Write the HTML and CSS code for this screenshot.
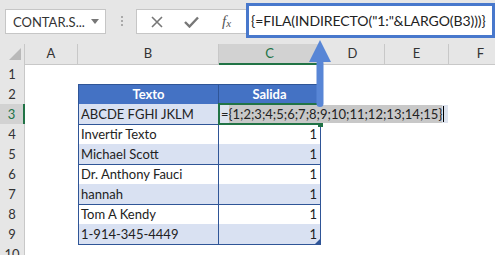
FILE: index.html
```html
<!doctype html>
<html lang="es">
<head>
    <meta charset="UTF-8">
    <meta name="viewport" content="width=device-width, initial-scale=1.0">
    <title>FILA e INDIRECTO</title>
    <link rel="stylesheet" href="styles.css">
</head>
<body>
    <div class="formula-bar">
        <div class="name-box"><span>CONTAR.S...</span><span class="caret"></span></div>
        <div class="grip"><i></i><i></i><i></i></div>
        <div class="fx-buttons">
            <svg width="12" height="12" viewBox="0 0 12 12"><path d="M1 1 L11 11 M11 1 L1 11" stroke="#777" stroke-width="1.6" fill="none"/></svg>
            <svg width="15" height="12" viewBox="0 0 15 12"><path d="M1 6 L5.5 10.5 L14 1.5" stroke="#777" stroke-width="2.4" fill="none"/></svg>
            <span class="fx">f<sub>x</sub></span>
        </div>
        <div class="formula-input">{=FILA(INDIRECTO("1:"&amp;LARGO(B3)))}</div>
    </div>

    <div class="sheet">
        <div class="row col-head">
            <div class="corner"><svg width="12" height="12" viewBox="0 0 12 12"><path d="M12 0 L12 12 L0 12 Z" fill="#b9b9b9"/></svg></div>
            <div>A</div><div>B</div><div class="sel">C</div><div>D</div><div>E</div><div>F</div>
        </div>
        <div class="row">
            <div class="row-head">1</div><div></div><div></div><div></div><div></div><div></div><div></div>
        </div>
        <div class="row">
            <div class="row-head">2</div><div></div>
            <div class="t head">Texto</div><div class="t head">Salida</div>
            <div></div><div></div><div></div>
        </div>
        <div class="row">
            <div class="row-head sel">3</div><div></div>
            <div class="t band">ABCDE FGHI JKLM</div>
            <div class="t band num active">
                <div class="edit">=<span class="picked">{1;2;3;4;5;6;7;8;9;10;11;12;13;14;15}</span><span class="cursor"></span></div>
            </div>
            <div></div><div></div><div></div>
        </div>
        <div class="row">
            <div class="row-head">4</div><div></div>
            <div class="t">Invertir Texto</div><div class="t num">1</div>
            <div></div><div></div><div></div>
        </div>
        <div class="row">
            <div class="row-head">5</div><div></div>
            <div class="t band">Michael Scott</div><div class="t band num">1</div>
            <div></div><div></div><div></div>
        </div>
        <div class="row">
            <div class="row-head">6</div><div></div>
            <div class="t">Dr. Anthony Fauci</div><div class="t num">1</div>
            <div></div><div></div><div></div>
        </div>
        <div class="row">
            <div class="row-head">7</div><div></div>
            <div class="t band">hannah</div><div class="t band num">1</div>
            <div></div><div></div><div></div>
        </div>
        <div class="row">
            <div class="row-head">8</div><div></div>
            <div class="t">Tom A Kendy</div><div class="t num">1</div>
            <div></div><div></div><div></div>
        </div>
        <div class="row">
            <div class="row-head">9</div><div></div>
            <div class="t band">1-914-345-4449</div><div class="t band num last">1</div>
            <div></div><div></div><div></div>
        </div>
        <div class="row">
            <div class="row-head">10</div><div></div><div></div><div></div><div></div><div></div><div></div>
        </div>
    </div>

    <!-- arrow from formula bar down to C3 -->
    <svg class="arrow" width="30" height="72" viewBox="0 0 30 72">
        <path d="M15 2 L26 24 L4 24 Z" fill="#5886d6"/>
        <rect x="11.5" y="22" width="7" height="47" rx="3.5" fill="#5886d6"/>
    </svg>
</body>
</html>
```

FILE: styles.css
```css
body {
    margin: 0;
    width: 495px;
    height: 255px;
    overflow: hidden;
    position: relative;
    background: #fff;
    font-family: Lato, "Liberation Sans", sans-serif;
    color: #222;
}

/* formula bar */
.formula-bar {
    height: 44px;
    background: #e6e6e6;
    display: flex;
    align-items: flex-start;
}
.name-box {
    margin: 9px 0 0 5px;
    width: 101px;
    height: 25px;
    box-sizing: border-box;
    background: #fff;
    border: 1px solid #c6c6c6;
    display: flex;
    align-items: center;
    justify-content: space-between;
    padding: 0 6px 0 7px;
    font-size: 13px;
    color: #333;
}
.caret {
    border-left: 4px solid transparent;
    border-right: 4px solid transparent;
    border-top: 5px solid #777;
}
.grip {
    margin: 16px 0 0 15px;
    display: flex;
    flex-direction: column;
    gap: 2px;
}
.grip i {
    display: block;
    width: 2px;
    height: 2px;
    background: #aaa;
}
.fx-buttons {
    margin: 9px 0 0 13px;
    width: 110px;
    height: 25px;
    box-sizing: border-box;
    background: #fff;
    border: 1px solid #c6c6c6;
    border-right: none;
    display: grid;
    grid-template-columns: 35px 35px 35px;
    padding-left: 2px;
    align-items: center;
    justify-items: center;
    flex-shrink: 0;
}
.fx {
    font-family: "Liberation Serif", serif;
    font-style: italic;
    font-size: 15px;
    color: #555;
    line-height: 1;
}
.fx sub {
    font-size: 11px;
    vertical-align: -1px;
}
.formula-input {
    margin-top: 3px;
    flex: 1;
    height: 35px;
    box-sizing: border-box;
    border: 3px solid #4878cc;
    background: #fff;
    padding-left: 2px;
    font-size: 14px;
    letter-spacing: -0.08px;
    line-height: 29px;
    white-space: nowrap;
    overflow: hidden;
    color: #222;
}

/* sheet grid */
.row {
    display: grid;
    grid-template-columns: 25px 53px 141px 102px 64px 64px 64px;
    height: 20px;
}
.row > div {
    box-sizing: border-box;
    white-space: nowrap;
    font-size: 13px;
    line-height: 20px;
}
.col-head {
    background: #e6e6e6;
}
.col-head > div {
    border-right: 1px solid #c8c8c8;
    border-bottom: 1px solid #c8c8c8;
    text-align: center;
    color: #333;
    line-height: 19px;
}
.col-head .corner {
    display: flex;
    justify-content: flex-end;
    align-items: flex-start;
    padding: 4px 3px 0 0;
}
.col-head .sel {
    background: #d2d2d2;
    border-bottom: 2px solid #217346;
    color: #217346;
}
.row .row-head {
    background: #e6e6e6;
    border-right: 1px solid #c8c8c8;
    border-bottom: 1px solid #d6d6d6;
    text-align: center;
    color: #333;
}
.row .row-head.sel {
    background: #d2d2d2;
    border-right: 2px solid #217346;
    color: #217346;
}

/* table */
.row .t {
    border-right: 1px solid #2f5597;
    border-bottom: 1px solid #2f5597;
    padding: 0 2px;
}
.row .t:nth-child(3) {
    border-left: 1px solid #2f5597;
}
.row .head {
    background: #4472c4;
    color: #fff;
    font-weight: bold;
    text-align: center;
    border-top: 1px solid #2f5597;
    line-height: 18px;
}
.row .band {
    background: #d9e1f2;
}
.row .num {
    text-align: right;
    padding-right: 3px;
}
.row .last {
    position: relative;
}
.row .last::after {
    content: "";
    position: absolute;
    right: 0;
    bottom: 0;
    border-left: 5px solid transparent;
    border-bottom: 5px solid #2f5597;
}

/* active cell in edit mode */
.row .active {
    position: relative;
    z-index: 2;
    text-align: left;
}
.row .active::before {
    content: "";
    position: absolute;
    left: -1px;
    top: -1px;
    right: -1px;
    bottom: -1px;
    border: 2px solid #217346;
}
.row .active::after {
    content: "";
    position: absolute;
    right: -3px;
    bottom: -3px;
    width: 5px;
    height: 5px;
    background: #217346;
}
.edit {
    position: absolute;
    left: 2px;
    top: 1px;
    width: 227px;
    height: 18px;
    line-height: 18px;
    display: flex;
    background: #dde3ee;
    z-index: 1;
}
.picked {
    background: #c8c8c8;
}
.cursor {
    width: 1px;
    height: 16px;
    margin: 1px 0 0 1px;
    background: #000;
}

.arrow {
    position: absolute;
    left: 305px;
    top: 38px;
    z-index: 5;
}
```
